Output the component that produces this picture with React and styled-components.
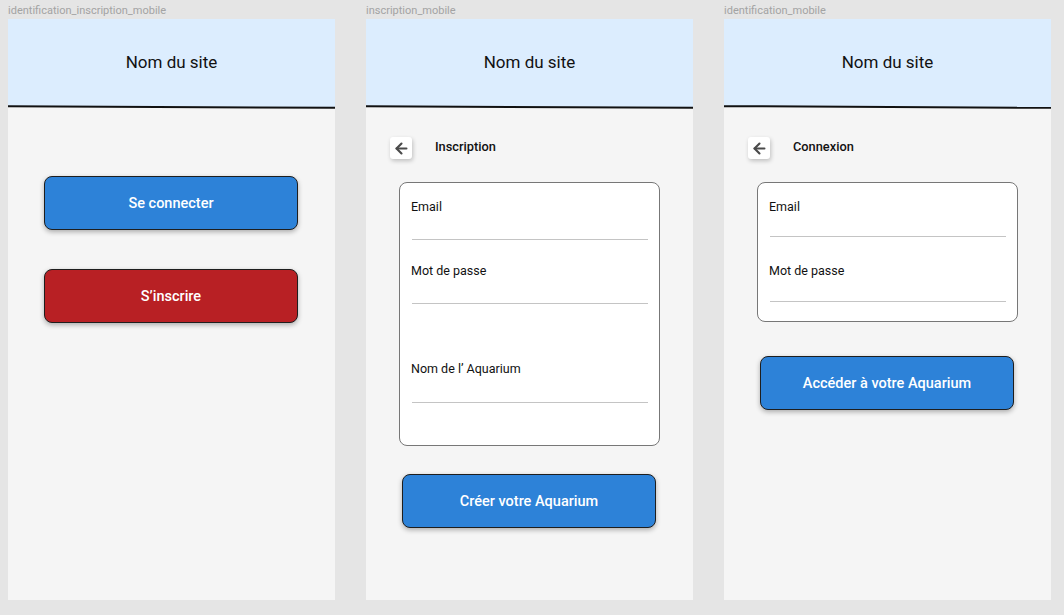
import React from "react";
import styled, { createGlobalStyle } from "styled-components";
import { ArrowLeft } from "lucide-react";

const GlobalStyle = createGlobalStyle`
  html, body {
    margin: 0;
    padding: 0;
    background: #e5e5e5;
    font-family: Roboto, "Liberation Sans", Arial, sans-serif;
  }
`;

const Canvas = styled.div`
  display: flex;
  gap: 31px;
  padding: 3px 8px 0;
  height: 615px;
  box-sizing: border-box;
  overflow: hidden;
`;

const FrameCol = styled.div`
  display: flex;
  flex-direction: column;
  width: 327px;
`;

const FrameLabel = styled.div`
  height: 16px;
  line-height: 16px;
  font-size: 11px;
  color: #a3a3a3;
`;

const Screen = styled.div`
  height: 581px;
  background: #f5f5f5;
  display: flex;
  flex-direction: column;
`;

const Header = styled.div`
  position: relative;
  height: 88px;
  box-sizing: border-box;
  padding-bottom: 2px;
  background: #dcedfe;
  display: flex;
  align-items: center;
  justify-content: center;
  font-size: 17px;
  color: #111;
  flex-shrink: 0;

  &::after {
    content: "";
    position: absolute;
    left: 0;
    right: 0;
    bottom: -1px;
    height: 2px;
    background: #111;
    transform: rotate(0.3deg);
  }
`;

const Body = styled.div`
  display: flex;
  flex-direction: column;
`;

const Button = styled.button`
  width: 254px;
  height: 54px;
  margin: ${(p) => p.$margin || "0"};
  margin-left: 36px;
  border: 1px solid #1e1e1e;
  border-radius: 8px;
  background: ${(p) => (p.$red ? "#b82024" : "#2d82d8")};
  color: #fff;
  font-family: inherit;
  font-size: 14.5px;
  font-weight: 500;
  box-shadow: 0 2px 5px rgba(0, 0, 0, 0.3);
  cursor: pointer;
`;

const TopRow = styled.div`
  display: flex;
  align-items: center;
  gap: 23px;
  padding: 30px 0 0 24px;
`;

const BackButton = styled.button`
  width: 22px;
  height: 22px;
  padding: 0;
  border: 0;
  border-radius: 3px;
  background: #fff;
  box-shadow: 1px 2px 4px rgba(0, 0, 0, 0.22);
  display: flex;
  align-items: center;
  justify-content: center;
  color: #4a4a4a;
`;

const PageTitle = styled.span`
  font-size: 12.8px;
  line-height: 14px;
  margin-top: -2px;
  font-weight: 500;
  color: #111;
`;

const Card = styled.div`
  width: 261px;
  box-sizing: border-box;
  margin: 23px 0 0 33px;
  padding: 16px 11px ${(p) => p.$bottom}px;
  background: #fff;
  border: 1px solid #777;
  border-radius: 8px;
  display: flex;
  flex-direction: column;
`;

const Field = styled.div`
  display: flex;
  flex-direction: column;
  margin-top: ${(p) => p.$top || 0}px;
`;

const FieldLabel = styled.label`
  font-size: 12.5px;
  line-height: 16px;
  color: #111;
`;

const FieldLine = styled.div`
  height: 1px;
  margin-top: ${(p) => p.$gap}px;
  margin-left: 1px;
  background: #c4c4c4;
`;

const Frame = ({ label, children }) => (
  <FrameCol>
    <FrameLabel>{label}</FrameLabel>
    <Screen>
      <Header>Nom du site</Header>
      {children}
    </Screen>
  </FrameCol>
);

const Back = ({ title }) => (
  <TopRow>
    <BackButton type="button">
      <ArrowLeft size={17} strokeWidth={3} />
    </BackButton>
    <PageTitle>{title}</PageTitle>
  </TopRow>
);

export default function App() {
  return (
    <>
      <GlobalStyle />
      <Canvas>
        <Frame label="identification_inscription_mobile">
          <Body>
            <Button $margin="69px 0 0">Se connecter</Button>
            <Button $red $margin="39px 0 0">S’inscrire</Button>
          </Body>
        </Frame>

        <Frame label="inscription_mobile">
          <Body>
            <Back title="Inscription" />
            <Card $bottom={42}>
              <Field>
                <FieldLabel>Email</FieldLabel>
                <FieldLine $gap={24} />
              </Field>
              <Field $top={23}>
                <FieldLabel>Mot de passe</FieldLabel>
                <FieldLine $gap={24} />
              </Field>
              <Field $top={57}>
                <FieldLabel>Nom de l’ Aquarium</FieldLabel>
                <FieldLine $gap={25} />
              </Field>
            </Card>
            <Button $margin="28px 0 0">Créer votre Aquarium</Button>
          </Body>
        </Frame>

        <Frame label="identification_mobile">
          <Body>
            <Back title="Connexion" />
            <Card $bottom={19}>
              <Field>
                <FieldLabel>Email</FieldLabel>
                <FieldLine $gap={21} />
              </Field>
              <Field $top={26}>
                <FieldLabel>Mot de passe</FieldLabel>
                <FieldLine $gap={22} />
              </Field>
            </Card>
            <Button $margin="34px 0 0">Accéder à votre Aquarium</Button>
          </Body>
        </Frame>
      </Canvas>
    </>
  );
}
